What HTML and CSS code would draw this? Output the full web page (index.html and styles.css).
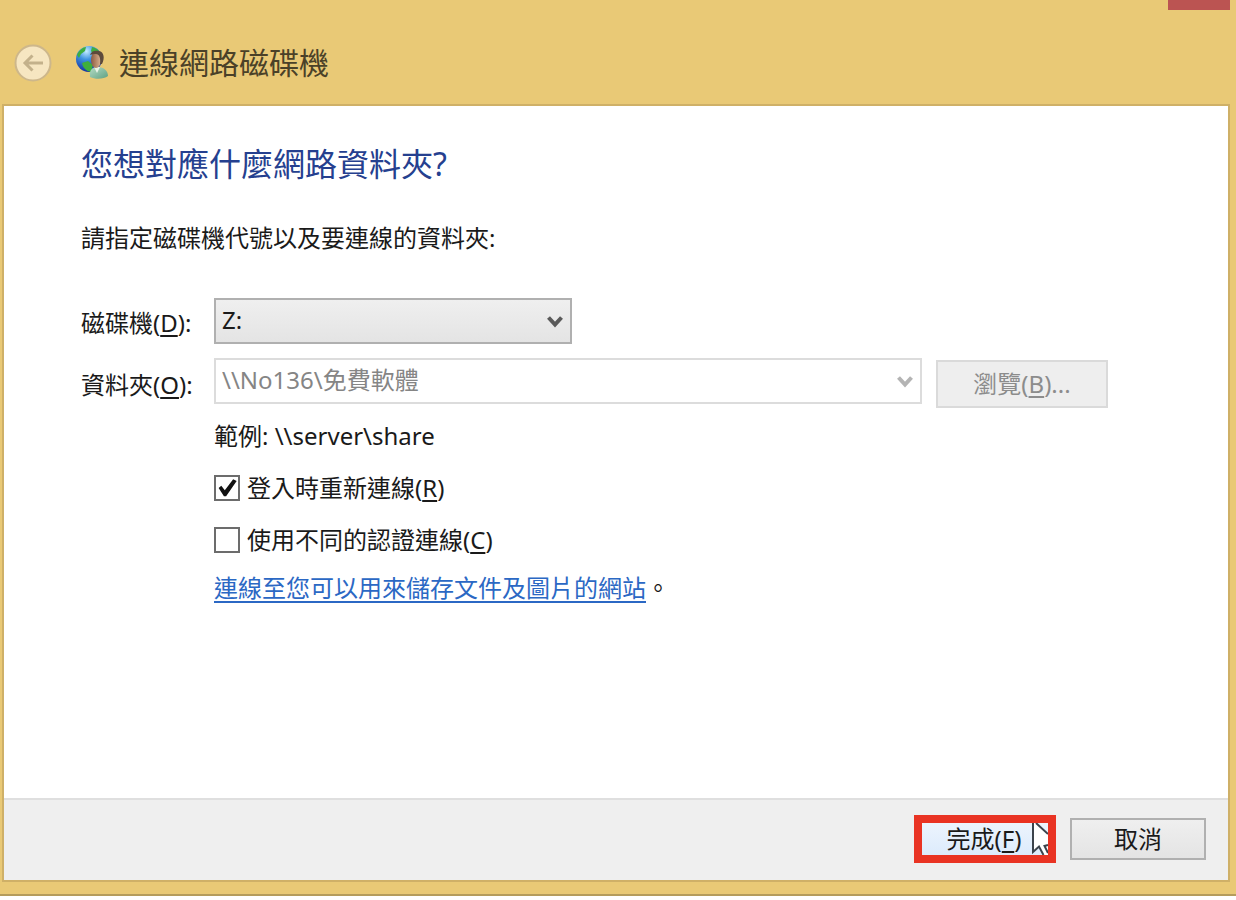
FILE: index.html
```html
<!DOCTYPE html>
<html lang="zh-Hant">
<head>
  <meta charset="UTF-8">
  <meta name="viewport" content="width=device-width, initial-scale=1.0">
  <title>連線網路磁碟機</title>
  <link rel="stylesheet" href="styles.css">
</head>
<body>
  <div class="window">
    <header class="titlebar">
      <button class="back" type="button" aria-label="上一步">
        <svg width="38" height="38" viewBox="0 0 38 38">
          <circle cx="19" cy="19" r="17.5" fill="#f6e6c1" stroke="#cdb78b" stroke-width="2"/>
          <path d="M29 19H11M18.500 11.500L11 19L18.500 26.500" fill="none" stroke="#c3b18b" stroke-width="3"/>
        </svg>
      </button>
      <svg class="app-icon" width="34" height="34" viewBox="0 0 34 34">
        <defs>
          <radialGradient id="globe" cx="0.4" cy="0.2" r="0.8">
            <stop offset="0" stop-color="#c5edff"/>
            <stop offset="0.4" stop-color="#3f94e0"/>
            <stop offset="1" stop-color="#1230a0"/>
          </radialGradient>
          <linearGradient id="face" x1="0" x2="1">
            <stop offset="0" stop-color="#8c5a40"/>
            <stop offset="1" stop-color="#dcb492"/>
          </linearGradient>
          <linearGradient id="shirt" x1="0" x2="1" y2="1">
            <stop offset="0" stop-color="#b4dcc4"/>
            <stop offset="1" stop-color="#5fa083"/>
          </linearGradient>
        </defs>
        <circle cx="14" cy="13" r="13" fill="url(#globe)"/>
        <path d="M2 9C4 4 8 1 11 1L10 5L6 8L4 12ZM17 1C21 2 24 4 25 7L18 8L16 5ZM7 17L13 15L18 19L16 26C11 25 8 22 7 17Z" fill="#3fae3d"/>
        <path d="M15 31C14 24 17 21 23 21C29 21 33 25 33 30C29 33 21 34 15 31Z" fill="url(#shirt)"/>
        <path d="M19 21L22 27L25 21Z" fill="#e9f3e8"/>
        <ellipse cx="21" cy="14" rx="5" ry="8" fill="url(#face)"/>
        <path d="M15 9C16 5 20 4 24 5C29 6 30 12 27 18L25 18C26 12 24 8 21 8C19 8 17 8 15 9Z" fill="#5d4a3c"/>
      </svg>
      <span class="title">連線網路磁碟機</span>
      <button class="close" type="button" aria-label="關閉"></button>
    </header>

    <form class="panel">
      <main class="content">
        <h1>您想對應什麼網路資料夾?</h1>
        <p class="intro">請指定磁碟機代號以及要連線的資料夾:</p>

        <div class="fields">
          <label for="drive">磁碟機(<u>D</u>):</label>
          <div class="combo combo-drive">
            <select id="drive">
              <option>Z:</option>
            </select>
            <svg class="chevron" width="16" height="14" viewBox="0 0 16 14">
              <path d="M1.500 2.500L8 9.500L14.500 2.500" fill="none" stroke="currentColor" stroke-width="4"/>
            </svg>
          </div>

          <label for="folder">資料夾(<u>O</u>):</label>
          <div class="folder-row">
            <div class="combo combo-folder">
              <select id="folder" disabled>
                <option>\\No136\免費軟體</option>
              </select>
              <svg class="chevron" width="16" height="14" viewBox="0 0 16 14">
                <path d="M1.500 2.500L8 9.500L14.500 2.500" fill="none" stroke="currentColor" stroke-width="4"/>
              </svg>
            </div>
            <button class="btn browse" type="button" disabled>瀏覽(<u>B</u>)...</button>
          </div>

          <div class="options">
            <p>範例: \\server\share</p>
            <label class="check"><input type="checkbox" checked><span>登入時重新連線(<u>R</u>)</span></label>
            <label class="check"><input type="checkbox"><span>使用不同的認證連線(<u>C</u>)</span></label>
            <p><a href="#">連線至您可以用來儲存文件及圖片的網站</a>。</p>
          </div>
        </div>
      </main>

      <footer class="actions">
        <div class="highlight">
          <button class="btn finish" type="submit">完成(<u>F</u>)</button>
          <svg class="cursor" width="17" height="32" viewBox="0 0 17 32">
            <path d="M2 0V29L8 24L12 32H17V11L5 0Z" fill="#fff"/>
            <path d="M5 0L17 11M2 0V29L8 23.500L12.500 32M17 22L13.500 23L17 30" fill="none" stroke="#3b434c" stroke-width="2"/>
          </svg>
        </div>
        <button class="btn cancel" type="button">取消</button>
      </footer>
    </form>
  </div>
</body>
</html>
```

FILE: styles.css
```css
* {
  box-sizing: border-box;
}

body {
  margin: 0;
  background: #fff;
  color: #1a1a1a;
  font-family: "Noto Sans", "Noto Sans CJK TC", sans-serif;
  font-size: 24px;
  line-height: 32px;
}

button,
select {
  font: inherit;
  color: inherit;
}

h1,
p {
  margin: 0;
}

u {
  text-underline-offset: 3px;
  text-decoration-thickness: 2px;
}

.window {
  display: flex;
  flex-direction: column;
  min-height: calc(100vh - 4px);
  padding: 0 6px 12px 2px;
  background: #e9c976;
  border-bottom: 2px solid #b59c5c;
}

/* Title bar */
.titlebar {
  display: flex;
  align-items: center;
  height: 104px;
  padding: 22px 0 0 12px;
}

.back {
  width: 38px;
  height: 38px;
  padding: 0;
  border: none;
  background: none;
}

.back svg,
.app-icon {
  display: block;
}

.app-icon {
  margin: 0 10px 0 23px;
}

.title {
  font-size: 30px;
  line-height: 40px;
  color: #4b4128;
}

.close {
  align-self: flex-start;
  width: 62px;
  height: 10px;
  margin: -22px 0 0 auto;
  padding: 0;
  border: none;
  background: #bb5452;
}

/* Dialog body */
.panel {
  flex: 1;
  display: flex;
  flex-direction: column;
  border: 2px solid #cfb067;
  background: #fff;
}

.content {
  flex: 1;
  padding: 36px 77px;
}

h1 {
  font-size: 32px;
  line-height: 44px;
  font-weight: 400;
  color: #25408f;
}

.intro {
  margin: 36px 0 44px;
}

.fields {
  display: grid;
  grid-template-columns: 133px 1fr;
  row-gap: 14px;
  align-items: center;
}

.fields > label {
  padding-top: 3px;
}

.combo {
  position: relative;
}

.combo-drive {
  width: 358px;
}

.combo-folder {
  flex: 0 1 708px;
}

.combo select {
  display: block;
  appearance: none;
  width: 100%;
  height: 46px;
  padding: 0 36px 2px 6px;
  border: 2px solid #b0b0b0;
  border-radius: 0;
  background: linear-gradient(#efefef, #e4e4e4);
}

.combo select:disabled {
  border-color: #dcdcdc;
  background: #fff;
  color: #858585;
  opacity: 1;
}

.chevron {
  position: absolute;
  top: 17px;
  right: 9px;
  color: #5a5a5a;
  pointer-events: none;
}

.combo-folder .chevron {
  color: #b4b4b4;
}

.folder-row {
  display: flex;
  align-items: flex-end;
  gap: 14px;
}

.btn {
  padding: 0;
  border: 2px solid #b0b0b0;
  background: linear-gradient(#efefef, #e4e4e4);
}

.browse {
  width: 172px;
  height: 48px;
  margin-top: 2px;
  border-color: #dadada;
  background: #eee;
  color: #8c8c8c;
}

.folder-row .combo {
  align-self: flex-start;
}

.options {
  grid-column: 2;
  display: flex;
  flex-direction: column;
  align-items: flex-start;
  margin-top: -2px;
}

.check {
  display: flex;
  align-items: center;
  gap: 7px;
  margin-top: 20px;
}

.check + p {
  margin-top: 16px;
}

.check input {
  appearance: none;
  width: 26px;
  height: 26px;
  margin: 0;
  border: 2px solid #6c6c6c;
  background: #fff;
}

.check input:checked::before {
  content: "";
  display: block;
  width: 22px;
  height: 22px;
  background: #111;
  clip-path: polygon(12% 50%, 24% 40%, 40% 60%, 78% 10%, 94% 18%, 46% 88%, 36% 88%);
}

a {
  color: #2b68c4;
  text-underline-offset: 4px;
  text-decoration-thickness: 2px;
}

/* Buttons at the bottom */
.actions {
  display: flex;
  align-items: center;
  justify-content: flex-end;
  gap: 14px;
  height: 82px;
  padding: 0 22px 2px;
  border-top: 2px solid #dfdfdf;
  background: #efefef;
}

.highlight {
  position: relative;
  display: flex;
  border: 8px solid #e93323;
  overflow: hidden;
}

.finish {
  width: 126px;
  height: 32px;
  padding-right: 2px;
  border: none;
  background: linear-gradient(#ecf4fd, #dcebfc);
}

.cursor {
  position: absolute;
  top: 0;
  right: 0;
}

.cancel {
  width: 136px;
  height: 42px;
}
```
